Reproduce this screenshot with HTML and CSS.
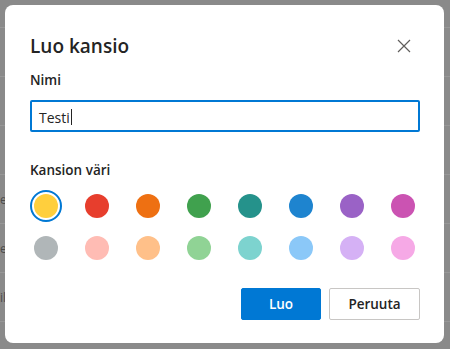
FILE: index.html
```html
<!DOCTYPE html>
<html lang="fi">
<head>
<meta charset="utf-8">
<title>Luo kansio</title>
<link rel="stylesheet" href="styles.css">
</head>
<body>
<div class="page">
  <div class="row first"></div>
  <div class="row"></div>
  <div class="row"></div>
  <div class="row"></div>
  <div class="row"><span class="frag">er</span></div>
  <div class="row"><span class="frag">er</span></div>
  <div class="row"><span class="frag">il</span></div>
</div>
<div class="dialog" role="dialog" aria-label="Luo kansio">
  <div class="head">
    <h1 class="title">Luo kansio</h1>
    <button class="close" aria-label="Sulje">
      <svg width="14" height="14" viewBox="0 0 14 14"><path d="M1 1L13 13M13 1L1 13" stroke="#605e5c" stroke-width="1.2" fill="none"/></svg>
    </button>
  </div>
  <label class="label name-label">Nimi</label>
  <div class="input"><span class="value">Testi</span><span class="caret"></span></div>
  <div class="label colors-label">Kansion väri</div>
  <div class="swatches">
    <div class="cell selected"><span class="dot" style="background:#ffcf3d"></span></div>
    <div class="cell"><span class="dot" style="background:#e73e2d"></span></div>
    <div class="cell"><span class="dot" style="background:#ee7012"></span></div>
    <div class="cell"><span class="dot" style="background:#40a14e"></span></div>
    <div class="cell"><span class="dot" style="background:#25928b"></span></div>
    <div class="cell"><span class="dot" style="background:#1e84cf"></span></div>
    <div class="cell"><span class="dot" style="background:#9a62c6"></span></div>
    <div class="cell"><span class="dot" style="background:#cb53b2"></span></div>
    <div class="cell"><span class="dot" style="background:#b0b6b8"></span></div>
    <div class="cell"><span class="dot" style="background:#ffbcb4"></span></div>
    <div class="cell"><span class="dot" style="background:#ffc089"></span></div>
    <div class="cell"><span class="dot" style="background:#90d395"></span></div>
    <div class="cell"><span class="dot" style="background:#7dd3cf"></span></div>
    <div class="cell"><span class="dot" style="background:#8bc8f8"></span></div>
    <div class="cell"><span class="dot" style="background:#d5b1f5"></span></div>
    <div class="cell"><span class="dot" style="background:#f6a9e6"></span></div>
  </div>
  <div class="actions">
    <button class="btn primary">Luo</button>
    <button class="btn secondary">Peruuta</button>
  </div>
</div>
</body>
</html>
```

FILE: styles.css
```css
* { box-sizing: border-box; }
html, body { margin: 0; padding: 0; }
body {
  width: 450px;
  height: 349px;
  overflow: hidden;
  background: #8a8a8a;
  font-family: "Open Sans", "Noto Sans", "Liberation Sans", sans-serif;
  position: relative;
}
.page { display: flex; flex-direction: column; }
.row {
  height: 49px;
  border-bottom: 1px solid #979797;
  display: flex;
  align-items: center;
  font-size: 12px;
  color: #4a4a4a;
}
.row.first { height: 28px; }
.frag { margin-left: 0; }
.dialog {
  position: absolute;
  left: 5px;
  top: 5px;
  width: 439px;
  height: 338px;
  background: #fff;
  border-radius: 8px;
  padding: 0 24px 23px 25px;
  display: flex;
  flex-direction: column;
  color: #242424;
}
.head {
  display: flex;
  align-items: center;
  justify-content: space-between;
  height: 80px;
  padding-top: 1px;
}
.title {
  margin: 0;
  font-size: 19px;
  font-weight: 600;
  line-height: 26px;
}
.close {
  border: 0;
  background: none;
  padding: 0;
  width: 14px;
  height: 14px;
  margin-right: 9px;
  display: flex;
}
.label {
  font-size: 13.5px;
  font-weight: 600;
  line-height: 20px;
}
.name-label { margin-top: -15px; }
.input {
  margin-top: 10px;
  height: 32px;
  border: 2px solid #0078d4;
  border-radius: 2px;
  display: flex;
  align-items: center;
  padding: 2px 0 0 7px;
  font-size: 14px;
  color: #242424;
}
.caret {
  width: 1px;
  height: 16px;
  background: #242424;
  margin-left: 1px;
}
.colors-label { margin-top: 28px; }
.swatches {
  margin-top: 10px;
  display: grid;
  grid-template-columns: repeat(8, 32px);
  column-gap: 19px;
  row-gap: 10px;
}
.cell {
  width: 32px;
  height: 32px;
  border-radius: 50%;
  display: flex;
  align-items: center;
  justify-content: center;
}
.cell.selected { border: 2px solid #0078d4; }
.dot {
  width: 24px;
  height: 24px;
  border-radius: 50%;
}
.actions {
  margin-top: auto;
  display: flex;
  justify-content: flex-end;
  gap: 8px;
}
.btn {
  height: 32px;
  border-radius: 2px;
  font-family: inherit;
  font-size: 13.5px;
  font-weight: 600;
  padding: 0;
}
.primary {
  width: 80px;
  background: #0078d4;
  color: #fff;
  border: 1px solid #0078d4;
}
.secondary {
  width: 91px;
  background: #fff;
  color: #242424;
  border: 1px solid #c8c6c4;
}
```
